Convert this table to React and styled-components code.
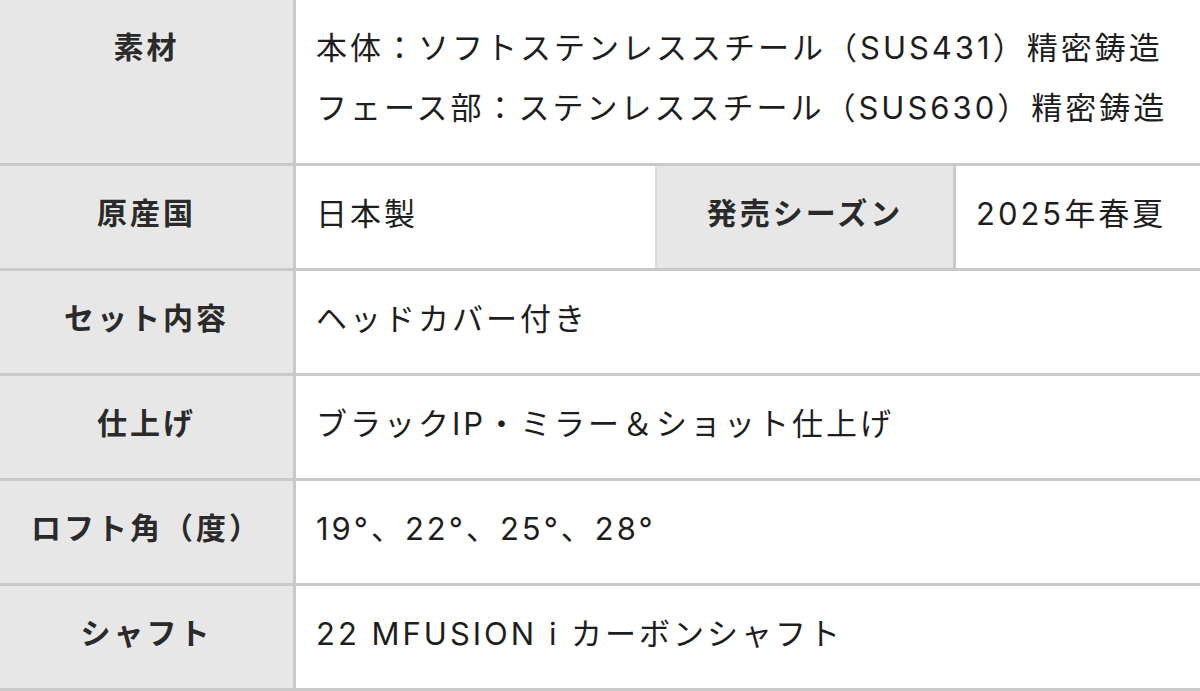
import React from "react";
import styled, { createGlobalStyle } from "styled-components";

const Global = createGlobalStyle`
  html, body { margin: 0; padding: 0; background: #fff; }
  body { font-family: Inter, "Noto Sans CJK JP", sans-serif; color: #222; }
`;

const Table = styled.div`
  width: 1200px;
  display: flex;
  flex-direction: column;
`;

const Row = styled.div`
  display: flex;
  border-bottom: 3px solid #c9c9c9;
  min-height: ${(p) => p.$h || 102}px;
`;

const Label = styled.div`
  width: ${(p) => p.$w || 293}px;
  flex: none;
  box-sizing: border-box;
  background: #e7e7e7;
  border-right: 3px solid #c9c9c9;
  border-left: ${(p) => (p.$inner ? "2px solid #dcdcdc" : "none")};
  padding-top: 15px;
  font-family: "Noto Sans CJK JP", sans-serif;
  font-weight: 700;
  font-size: 30px;
  letter-spacing: 3px;
  line-height: 60px;
  text-align: center;
  color: #2a2a2a;
`;

const Value = styled.div`
  flex: ${(p) => (p.$w ? "none" : "1")};
  width: ${(p) => (p.$w ? `${p.$w}px` : "auto")};
  box-sizing: border-box;
  padding: 18px 0 0 ${(p) => p.$pl || 20}px;
  font-size: 31px;
  letter-spacing: 3px;
  line-height: 60px;
  color: #1e1e1e;
  white-space: nowrap;
`;

const Line = styled.div``;

export default function App() {
  return (
    <>
      <Global />
      <Table>
        <Row $h={163}>
          <Label $w={296}>素材</Label>
          <Value>
            <Line>本体：ソフトステンレススチール（SUS431）精密鋳造</Line>
            <Line>フェース部：ステンレススチール（SUS630）精密鋳造</Line>
          </Value>
        </Row>
        <Row>
          <Label $w={296}>原産国</Label>
          <Value $w={359}>日本製</Value>
          <Label $w={301} $inner>発売シーズン</Label>
          <Value $pl={20}>2025年春夏</Value>
        </Row>
        <Row>
          <Label $w={296}>セット内容</Label>
          <Value>ヘッドカバー付き</Value>
        </Row>
        <Row>
          <Label $w={296}>仕上げ</Label>
          <Value>ブラックIP・ミラー＆ショット仕上げ</Value>
        </Row>
        <Row>
          <Label $w={296}>ロフト角（度）</Label>
          <Value>19°、22°、25°、28°</Value>
        </Row>
        <Row>
          <Label $w={296}>シャフト</Label>
          <Value>22 MFUSION i カーボンシャフト</Value>
        </Row>
      </Table>
    </>
  );
}
